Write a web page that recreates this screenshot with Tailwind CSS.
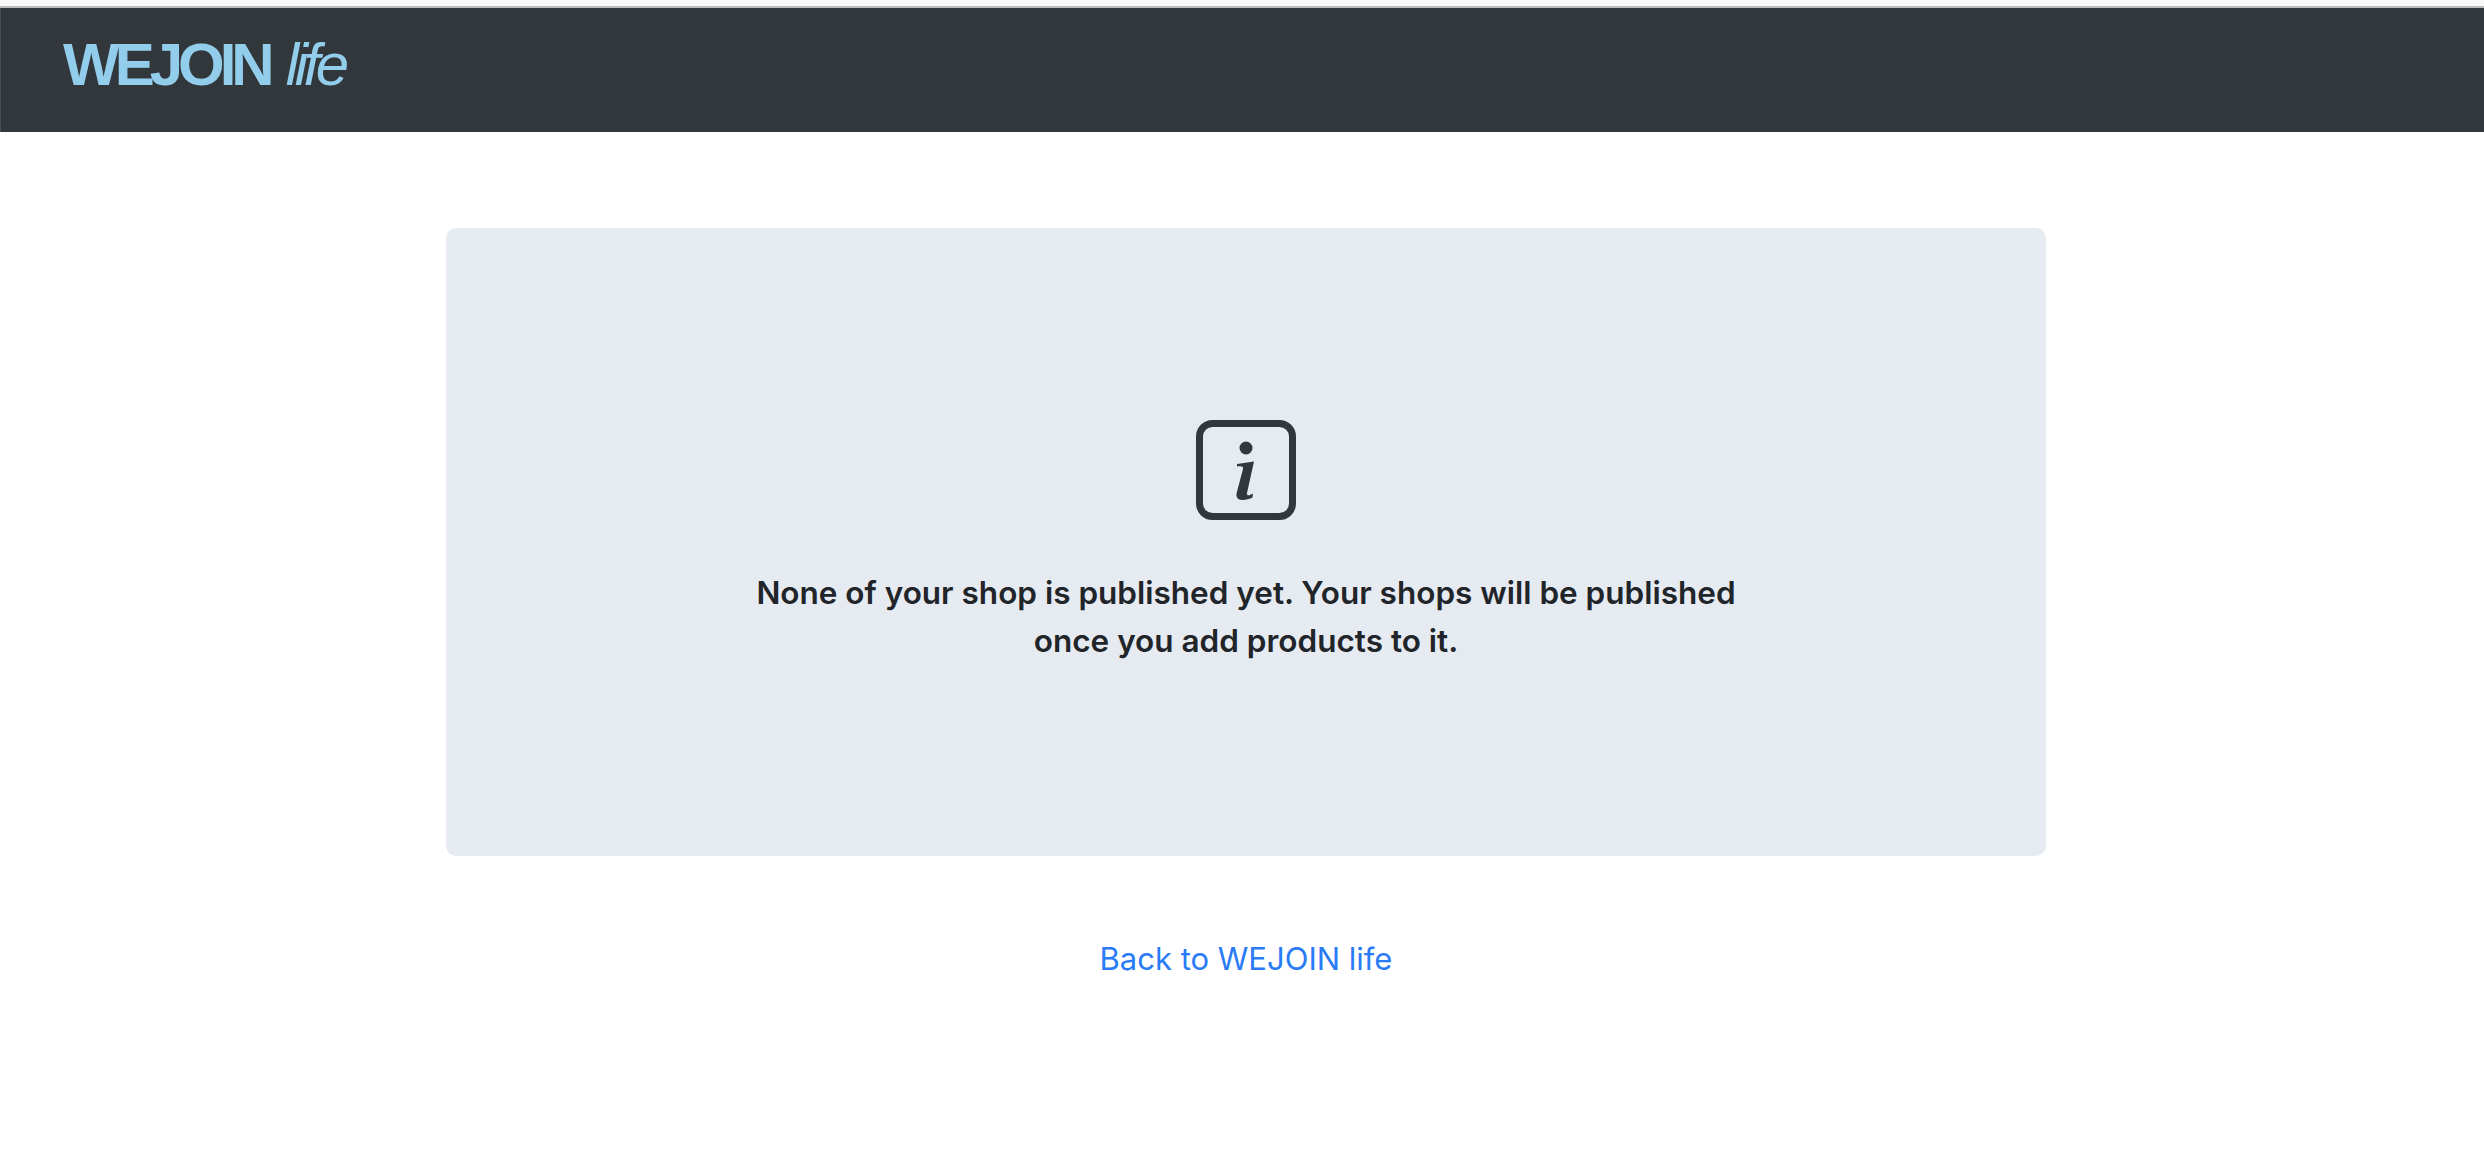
<!DOCTYPE html>
<html lang="en">
<head>
  <meta charset="UTF-8" />
  <meta name="viewport" content="width=device-width, initial-scale=1" />
  <title>WEJOIN life</title>
  <script src="https://cdn.jsdelivr.net/npm/@tailwindcss/browser@4"></script>
</head>
<body class="bg-white font-['Inter',sans-serif] overflow-hidden">

  <!-- Top strip -->
  <div class="h-[6px] bg-[#f8f8fa]"></div>
  <div class="h-[2px] bg-[#bcbcbc]"></div>

  <!-- Navbar -->
  <nav class="h-[124px] bg-[#32373b] border-l border-l-[#4a4f54] pl-[62px] flex items-start">
    <a href="#" class="flex items-baseline pt-[21px] text-[#93cdec] font-['Liberation_Sans',sans-serif] leading-[72px]">
      <span class="text-[60px] font-bold tracking-[-5px]">WEJOIN</span>
      <span class="ml-[16px] text-[60px] font-light italic tracking-[-4.4px]">life</span>
    </a>
  </nav>

  <main class="flex flex-col items-center pt-[96px] pl-[8px]">
    <!-- Empty state -->
    <section class="w-[1600px] h-[628px] bg-[#e6ebf2] rounded-[10px] flex flex-col items-center pt-[192px]">
      <svg class="w-[100px] h-[100px]" viewBox="0 0 100 100" fill="none">
        <rect x="3.5" y="3.5" width="93" height="93" rx="13" stroke="#32373b" stroke-width="7" />
        <circle cx="50" cy="28" r="6.5" fill="#32373b" />
        <path d="M41 44 L58 41.5 L51 73 C50.5 76 53 76 57 73.5 L56.5 77.5 C51 80.5 41 82 40.5 75.5 C40.5 73 41.5 70 47 49 C47.500 46.500 46 46 41 46.500 Z" fill="#32373b" />
      </svg>
      <p class="mt-[49px] w-[1000px] text-center text-[31.5px] leading-[48px] font-semibold text-[#212529]">
        None of your shop is published yet. Your shops will be published<br />once you add products to it.
      </p>
    </section>

    <a href="#" class="mt-[79px] text-[31px] leading-[48px] text-[#2a7bf6]">Back to WEJOIN life</a>
  </main>

</body>
</html>
